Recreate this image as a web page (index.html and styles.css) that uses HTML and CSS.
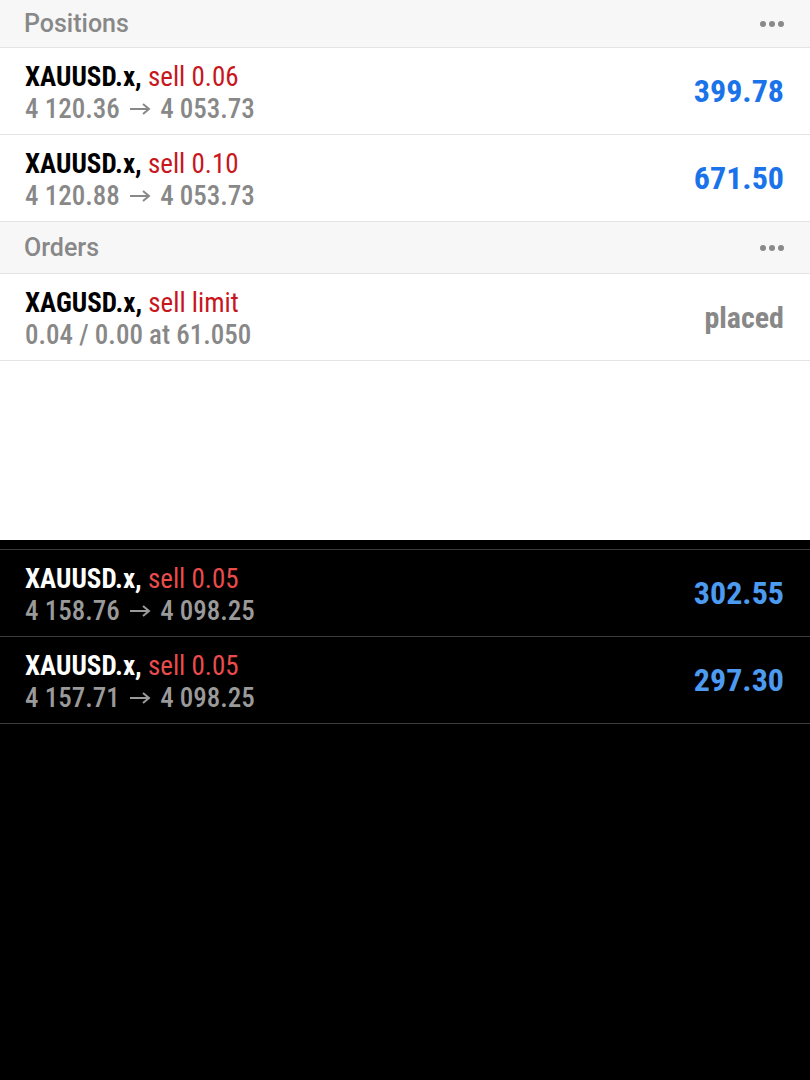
FILE: index.html
```html
<!DOCTYPE html>
<html>
<head>
    <title>Trade</title>
    <meta name="viewport" content="width=device-width, initial-scale=1.0">
    <link rel="stylesheet" href="styles.css">
</head>
<body>
    <div class="screen light">
        <div class="section-head first">
            <span class="section-title">Positions</span>
            <span class="dots"><i></i><i></i><i></i></span>
        </div>
        <div class="row">
            <div class="info">
                <div class="line1"><span class="sym">XAUUSD.x,</span> <span class="side">sell 0.06</span></div>
                <div class="line2">4 120.36 <svg class="arrow" viewBox="0 0 22 14"><path d="M1 7H20M14 2L20 7L14 12"/></svg> 4 053.73</div>
            </div>
            <div class="value">399.78</div>
        </div>
        <div class="row">
            <div class="info">
                <div class="line1"><span class="sym">XAUUSD.x,</span> <span class="side">sell 0.10</span></div>
                <div class="line2">4 120.88 <svg class="arrow" viewBox="0 0 22 14"><path d="M1 7H20M14 2L20 7L14 12"/></svg> 4 053.73</div>
            </div>
            <div class="value">671.50</div>
        </div>
        <div class="section-head">
            <span class="section-title">Orders</span>
            <span class="dots"><i></i><i></i><i></i></span>
        </div>
        <div class="row">
            <div class="info">
                <div class="line1"><span class="sym">XAGUSD.x,</span> <span class="side">sell limit</span></div>
                <div class="line2">0.04 / 0.00 at 61.050</div>
            </div>
            <div class="value status">placed</div>
        </div>
    </div>

    <div class="screen dark">
        <div class="row">
            <div class="info">
                <div class="line1"><span class="sym">XAUUSD.x,</span> <span class="side">sell 0.05</span></div>
                <div class="line2">4 158.76 <svg class="arrow" viewBox="0 0 22 14"><path d="M1 7H20M14 2L20 7L14 12"/></svg> 4 098.25</div>
            </div>
            <div class="value">302.55</div>
        </div>
        <div class="row">
            <div class="info">
                <div class="line1"><span class="sym">XAUUSD.x,</span> <span class="side">sell 0.05</span></div>
                <div class="line2">4 157.71 <svg class="arrow" viewBox="0 0 22 14"><path d="M1 7H20M14 2L20 7L14 12"/></svg> 4 098.25</div>
            </div>
            <div class="value">297.30</div>
        </div>
    </div>
</body>
</html>
```

FILE: styles.css
```css
body {
    margin: 0;
    font-family: 'Roboto', 'Liberation Sans', sans-serif;
    font-stretch: 75%;
    background-color: black;
}

.screen.light {
    background-color: white;
    height: 540px;
}

.screen.dark {
    background-color: black;
    border-top: 9px solid black;
}

.section-head {
    display: flex;
    align-items: center;
    justify-content: space-between;
    height: 51px;
    padding: 0 26px 0 24px;
    background-color: #f7f7f7;
    border-bottom: 1px solid #e4e4e4;
}

.section-head.first {
    height: 47px;
}

.section-title {
    font-size: 25px;
    font-weight: 500;
    font-stretch: 100%;
    color: #888;
}

.dots {
    display: flex;
    gap: 3px;
}

.dots i {
    width: 6px;
    height: 6px;
    border-radius: 50%;
    background-color: #8a8a8a;
}

.row {
    display: flex;
    align-items: center;
    justify-content: space-between;
    height: 86px;
    padding: 0 26px 0 25px;
    border-bottom: 1px solid #e4e4e4;
}

.dark .row {
    border-top: 1px solid #3a3a3a;
    border-bottom: none;
}

.dark .row:last-child {
    border-bottom: 1px solid #3a3a3a;
}

.info {
    padding-top: 3px;
}

.line1, .line2 {
    font-size: 27px;
    line-height: 32px;
}

.sym {
    font-weight: 700;
    color: black;
}

.side {
    color: #c8161d;
}

.line2 {
    font-weight: 500;
    color: #888;
}

.arrow {
    width: 22px;
    height: 14px;
    margin: 0 3px;
    vertical-align: 2px;
    fill: none;
    stroke: currentColor;
    stroke-width: 2;
}

.value {
    font-size: 32px;
    font-weight: 700;
    color: #1a73e8;
}

.value.status {
    color: #888;
    font-size: 30px;
}

.dark .sym {
    color: white;
}

.dark .side {
    color: #ea4c4c;
}

.dark .line2 {
    color: #9a9a9a;
}

.dark .value {
    color: #4c9bf0;
}
```
